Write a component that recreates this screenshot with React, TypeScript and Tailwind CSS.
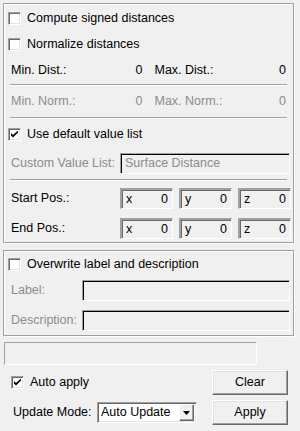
import React from 'react';

const sunkenInput =
  'h-[21px] border border-t-[#a0a0a0] border-l-[#a0a0a0] border-b-white border-r-white shadow-[inset_1px_1px_0_#000] bg-[#f0f0f0] flex items-center px-[4px]';

function Check({ checked = false }: { checked?: boolean }) {
  return (
    <span className="w-[13px] h-[13px] shrink-0 bg-white border border-t-[#a0a0a0] border-l-[#a0a0a0] border-b-white border-r-white shadow-[inset_1px_1px_0_#696969,inset_-1px_-1px_0_#e3e3e3] flex items-center justify-center">
      {checked && (
        <svg width="7" height="7" viewBox="0 0 7 7">
          <path d="M0 2 L0 4.5 L2 6.5 L7 1.5 L7 -0.5 L2 4 Z" fill="#000" />
        </svg>
      )}
    </span>
  );
}

function CheckRow({ label, checked, className = '' }: { label: string; checked?: boolean; className?: string }) {
  return (
    <div className={`flex items-center gap-[6px] pl-[4px] ${className}`}>
      <Check checked={checked} />
      <span>{label}</span>
    </div>
  );
}

function Separator() {
  return <div className="mx-[6px] h-[2px] border-t border-t-[#a0a0a0] border-b border-b-white" />;
}

function ValuePair({ label, value, disabled }: { label: string; value: string; disabled?: boolean }) {
  return (
    <div className={`flex-1 flex justify-between ${disabled ? 'text-[#8c8c8c]' : ''}`}>
      <span>{label}</span>
      <span>{value}</span>
    </div>
  );
}

function XYZ() {
  return (
    <div className="flex gap-[6px]">
      {['x', 'y', 'z'].map((c) => (
        <div
          key={c}
          className="w-[53px] h-[21px] border-t-2 border-l-2 border-t-[#a0a0a0] border-l-[#a0a0a0] border-b border-r border-b-white border-r-white shadow-[inset_1px_1px_0_#696969] flex items-center justify-between pl-[4px] pr-[4px]"
        >
          <span>{c}</span>
          <span>0</span>
        </div>
      ))}
    </div>
  );
}

function Frame({ children, className = '' }: { children: React.ReactNode; className?: string }) {
  return (
    <div className={`ml-[3px] w-[291px] border border-[#a0a0a0] shadow-[inset_1px_1px_0_#fff,1px_1px_0_#fff] ${className}`}>
      {children}
    </div>
  );
}

function Button({ label }: { label: string }) {
  return (
    <button className="w-[76px] h-[25px] bg-[#f0f0f0] border border-t-white border-l-white border-b-[#696969] border-r-[#696969] shadow-[inset_-1px_-1px_0_#a0a0a0,inset_1px_1px_0_#e3e3e3] text-black">
      {label}
    </button>
  );
}

export default function App() {
  return (
    <div className="w-[300px] h-[431px] bg-[#f0f0f0] text-black text-[12.5px] leading-none font-['Liberation_Sans',sans-serif] pt-[3px] overflow-hidden">
      <Frame>
        <CheckRow label="Compute signed distances" className="h-[28px]" />
        <CheckRow label="Normalize distances" className="h-[24px]" />
        <div className="h-[28px] flex items-center gap-[12px] px-[7px]">
          <ValuePair label="Min. Dist.:" value="0" />
          <ValuePair label="Max. Dist.:" value="0" />
        </div>
        <Separator />
        <div className="h-[31px] flex items-center gap-[12px] px-[7px]">
          <ValuePair label="Min. Norm.:" value="0" disabled />
          <ValuePair label="Max. Norm.:" value="0" disabled />
        </div>
        <Separator />
        <CheckRow label="Use default value list" checked className="h-[30px]" />
        <div className="h-[28px] flex items-center pl-[7px] pr-[3px]">
          <span className="w-[109px] text-[#8c8c8c]">Custom Value List:</span>
          <div className={`${sunkenInput} flex-1 text-[#8c8c8c]`}>Surface Distance</div>
        </div>
        <div className="mt-[2px]">
          <Separator />
        </div>
        <div className="pt-[7px] pb-[3px] pl-[7px] flex flex-col gap-[9px]">
          <div className="flex items-center">
            <span className="w-[109px]">Start Pos.:</span>
            <XYZ />
          </div>
          <div className="flex items-center">
            <span className="w-[109px]">End Pos.:</span>
            <XYZ />
          </div>
        </div>
      </Frame>

      <Frame className="mt-[7px]">
        <CheckRow label="Overwrite label and description" className="h-[26px]" />
        <div className="pt-[3px] pb-[4px] pl-[7px] pr-[3px] flex flex-col gap-[9px] text-[#8c8c8c]">
          <div className="flex items-center">
            <span className="w-[71px]">Label:</span>
            <div className={`${sunkenInput} flex-1`} />
          </div>
          <div className="flex items-center">
            <span className="w-[71px]">Description:</span>
            <div className={`${sunkenInput} flex-1`} />
          </div>
        </div>
      </Frame>

      <div className="mt-[6px] ml-[4px] w-[253px] h-[23px] border border-t-[#a0a0a0] border-l-[#a0a0a0] border-b-white border-r-white" />

      <div className="mt-[5px] pr-[12px] flex flex-col gap-[5px]">
        <div className="flex items-center justify-between">
          <div className="flex items-center gap-[6px] pl-[11px]">
            <Check checked />
            <span>Auto apply</span>
          </div>
          <Button label="Clear" />
        </div>
        <div className="flex items-center justify-between">
          <div className="flex items-center pl-[13px]">
            <span className="w-[84px]">Update Mode:</span>
            <div className="w-[100px] h-[21px] bg-white border border-t-[#a0a0a0] border-l-[#a0a0a0] border-b-white border-r-white shadow-[inset_1px_1px_0_#696969,inset_-1px_-1px_0_#e3e3e3] flex items-center pl-[3px] pr-[2px]">
              <span className="flex-1">Auto Update</span>
              <span className="w-[15px] h-[17px] bg-[#f0f0f0] border border-t-white border-l-white border-b-[#696969] border-r-[#696969] shadow-[inset_-1px_-1px_0_#a0a0a0] flex items-center justify-center">
                <svg width="7" height="4" viewBox="0 0 7 4">
                  <path d="M0 0 H7 L3.5 4 Z" fill="#000" />
                </svg>
              </span>
            </div>
          </div>
          <Button label="Apply" />
        </div>
      </div>
    </div>
  );
}
